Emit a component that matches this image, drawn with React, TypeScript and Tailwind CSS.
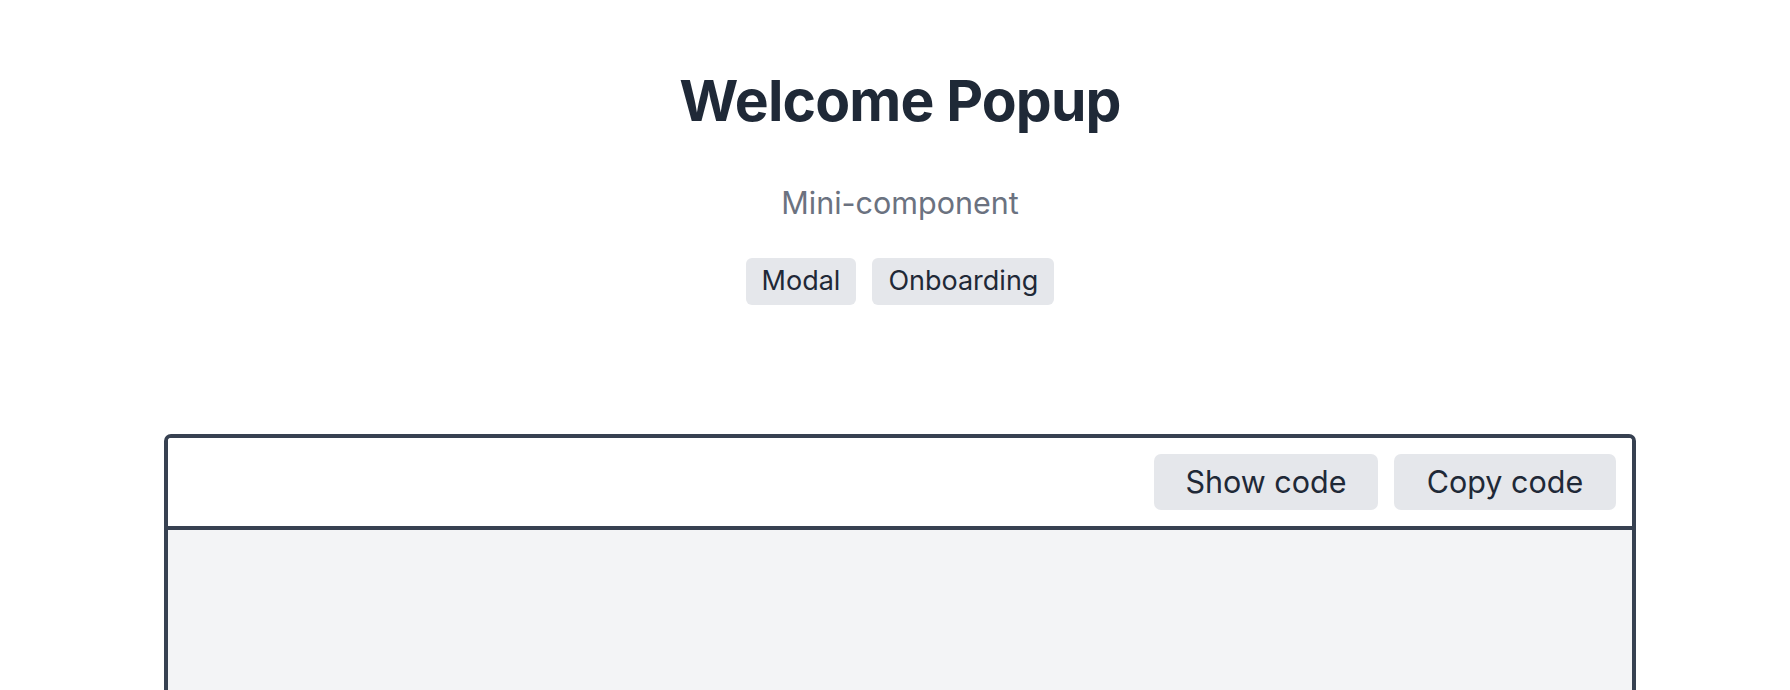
import React from 'react';

const tags = ['Modal', 'Onboarding'];

const App: React.FC = () => {
  return (
    <div className="min-h-screen bg-white font-['Inter',sans-serif] text-[#1f2937]">
      <div className="flex flex-col items-center pt-[72px] pl-[10px]">
        <h1 className="text-[57px] leading-[58px] font-bold tracking-[-0.015em]">Welcome Popup</h1>
        <p className="mt-[53px] text-[30.5px] leading-[40px] text-[#6b7280]">Mini-component</p>
        <div className="mt-[35px] flex gap-[16px]">
          {tags.map((t) => (
            <span key={t} className="h-[47px] px-[16px] flex items-center rounded-[6px] bg-[#e5e7eb] text-[27px] text-[#1f2937]">
              {t}
            </span>
          ))}
        </div>
      </div>

      {/* Preview frame */}
      <div className="ml-[164px] mt-[129px] w-[1472px] rounded-[7px] border-4 border-[#374151] overflow-hidden">
        <div className="flex justify-end gap-[16px] px-[16px] py-[16px] border-b-4 border-[#374151] bg-white">
          <button className="h-[56px] w-[224px] rounded-[7px] bg-[#e5e7eb] text-[30.5px] text-[#1f2937]">Show code</button>
          <button className="h-[56px] w-[222px] rounded-[7px] bg-[#e5e7eb] text-[30.5px] text-[#1f2937]">Copy code</button>
        </div>
        <div className="h-[400px] bg-[#f3f4f6]"></div>
      </div>
    </div>
  );
};

export default App;
